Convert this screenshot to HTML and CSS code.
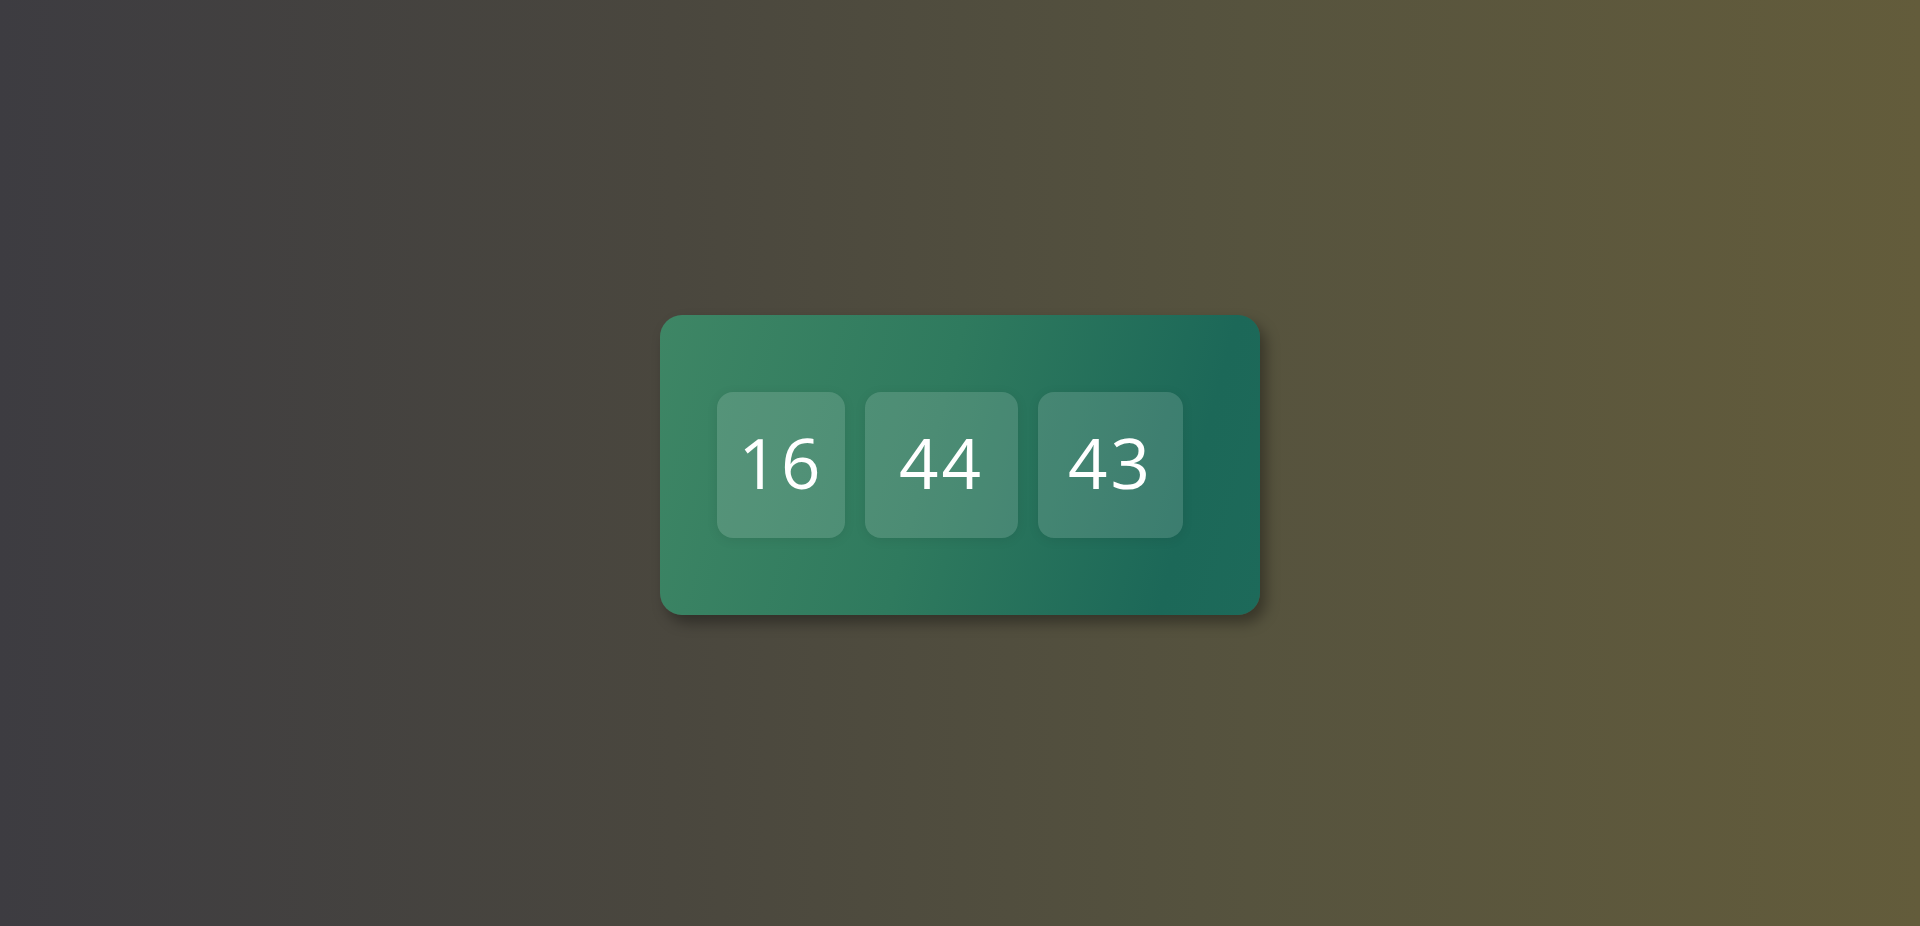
FILE: index.html
```html
<!DOCTYPE html>
<html lang="en">
<head>
<meta charset="utf-8">
<title>Clock</title>
<link rel="stylesheet" href="styles.css">
</head>
<body>
<main class="stage">
  <section class="card">
    <div class="unit unit-hours">16</div>
    <div class="unit unit-minutes">44</div>
    <div class="unit unit-seconds">43</div>
  </section>
</main>
</body>
</html>
```
FILE: styles.css
```css
html, body {
  margin: 0;
  padding: 0;
  height: 100%;
}
body {
  background: linear-gradient(90deg, #3d3c41 0%, #4a473e 35%, #56533e 65%, #635c3b 100%);
  font-family: "Open Sans", "Inter", sans-serif;
}
.stage {
  min-height: 100vh;
  box-sizing: border-box;
  padding-top: 4px;
  display: flex;
  align-items: center;
  justify-content: center;
}
.card {
  width: 600px;
  height: 300px;
  box-sizing: border-box;
  padding-left: 57px;
  border-radius: 22px;
  background: linear-gradient(105deg, #3e8665 0%, #2f7a5e 45%, #1c6858 85%, #1d6a5a 100%);
  box-shadow: 6px 8px 14px rgba(0, 0, 0, 0.35);
  display: flex;
  align-items: center;
  gap: 20px;
}
.unit {
  height: 146px;
  box-sizing: border-box;
  padding-bottom: 6px;
  display: flex;
  align-items: center;
  justify-content: center;
  border-radius: 16px;
  background: rgba(255, 255, 255, 0.14);
  box-shadow: 0 2px 12px rgba(0, 0, 0, 0.08);
  color: #ffffff;
  font-size: 69px;
  font-weight: 400;
  letter-spacing: 3px;
  line-height: 1;
}
.unit-hours { width: 128px; }
.unit-minutes { width: 153px; }
.unit-seconds { width: 145px; }
```
